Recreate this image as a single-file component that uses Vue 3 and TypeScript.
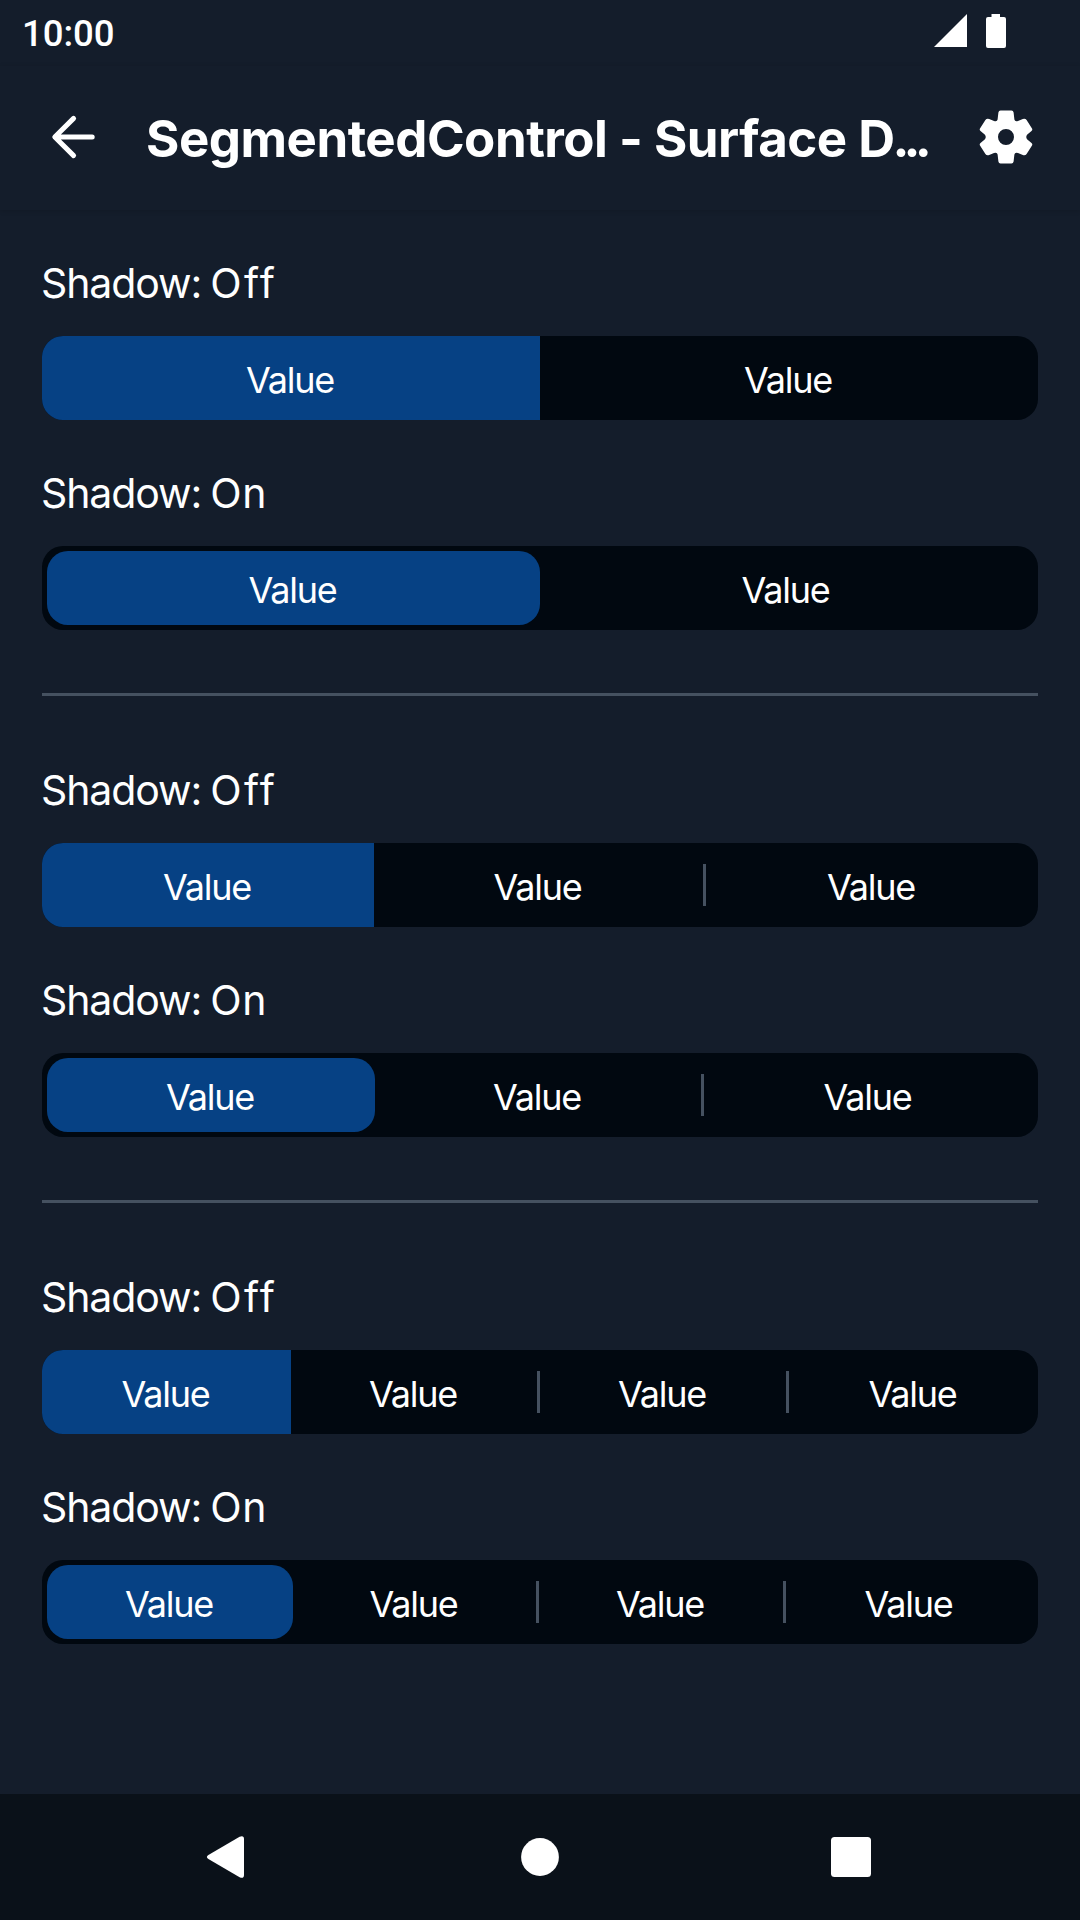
<script setup lang="ts">
interface Control {
  state: string
  raised: boolean
  values: string[]
}

const segments = (count: number): string[] => Array.from({ length: count }, () => 'Value')

const groups: Control[][] = [2, 3, 4].map((count) => [
  { state: 'Off', raised: false, values: segments(count) },
  { state: 'On', raised: true, values: segments(count) },
])
</script>

<template>
  <div class="screen">
    <div class="status">
      <span class="time">10:00</span>
      <svg class="status-icons" width="74" height="36" viewBox="0 0 74 36">
        <path d="M34 1V34H1Z" fill="#fff" />
        <path d="M58.5 1H67V4H71Q73 4 73 6V33Q73 35 71 35H55Q53 35 53 33V6Q53 4 55 4H58.5Z" fill="#fff" />
      </svg>
    </div>

    <header class="app-bar">
      <svg class="back" width="72" height="72" viewBox="0 0 72 72">
        <path d="M37.6 16.4L18.8 35L37.6 53.6M19 35H56.2" fill="none" stroke="#fff" stroke-width="5" stroke-linecap="round" stroke-linejoin="round" />
      </svg>
      <h1 class="title">SegmentedControl - Surface D<span class="dots">...</span></h1>
      <svg class="gear" width="54" height="54" viewBox="-27 -27 54 54">
        <path
          fill="#fff"
          fill-rule="evenodd"
          d="M-5.5 -26.5H5.5Q7.3 -26.3 7.6 -24.5L8.4 -17.5Q8.8 -15 12 -16L16.8 -18Q19.3 -18.8 20.6 -17L26 -8.6Q26.8 -7.2 25.5 -6L21.3 -2.4Q19.2 0 21.3 2.4L25.5 6Q26.8 7.2 26 8.6L20.6 17Q19.3 18.8 16.8 18L12 16Q8.8 15 8.4 17.5L7.6 24.5Q7.3 26.3 5.5 26.5H-5.5Q-7.3 26.3 -7.6 24.5L-8.4 17.5Q-8.8 15 -12 16L-16.8 18Q-19.3 18.8 -20.6 17L-26 8.6Q-26.8 7.2 -25.5 6L-21.3 2.4Q-19.2 0 -21.3 -2.4L-25.5 -6Q-26.8 -7.2 -26 -8.6L-20.6 -17Q-19.3 -18.8 -16.8 -18L-12 -16Q-8.8 -15 -8.4 -17.5L-7.6 -24.5Q-7.3 -26.3 -5.5 -26.5ZM0 -8A8 8 0 1 0 0 8A8 8 0 1 0 0 -8Z"
        />
      </svg>
    </header>

    <main class="content">
      <section v-for="(group, g) in groups" :key="g" class="group">
        <div v-for="control in group" :key="control.state" class="item">
          <div class="label">Shadow: <span class="state" :class="{ off: !control.raised }">{{ control.state }}</span></div>
          <div class="control" :class="['count-' + control.values.length, { raised: control.raised }]">
            <div
              v-for="(value, i) in control.values"
              :key="i"
              class="segment"
              :class="{ selected: i === 0, divided: i > 0 && i < control.values.length - 1 }"
            >
              <span class="value">{{ value }}</span>
            </div>
          </div>
        </div>
      </section>
    </main>

    <nav class="nav">
      <svg width="1080" height="126" viewBox="0 0 1080 126">
        <path d="M208.4 61L239.6 42.7Q244 41 244 45V81Q244 85 239.6 83.3L208.4 65Q205.4 63 208.4 61Z" fill="#fff" />
        <circle cx="540" cy="63" r="18.9" fill="#fff" />
        <rect x="831" y="43" width="40" height="40" rx="3.5" fill="#fff" />
      </svg>
    </nav>
  </div>
</template>

<style>
body {
  margin: 0;
  background: #141d2b;
}
</style>

<style scoped>
.screen {
  display: flex;
  flex-direction: column;
  width: 1080px;
  height: 1920px;
  overflow: hidden;
  background: #141d2b;
  color: #fff;
  font-family: Inter, "Liberation Sans", sans-serif;
}
.status {
  display: flex;
  justify-content: space-between;
  height: 66px;
  padding: 0 73px 0 22px;
  box-sizing: border-box;
}
.time {
  font: 500 36.5px/67px Roboto, sans-serif;
}
.status-icons {
  margin-top: 13px;
}
.app-bar {
  display: flex;
  align-items: center;
  height: 144px;
  padding: 0 47px 0 36px;
  box-sizing: border-box;
  box-shadow: 0 1px 5px rgba(0, 0, 0, 0.14);
}
.back {
  flex: none;
  margin-top: -1px;
}
.title {
  flex: 1;
  margin: 2px 0 0 38px;
  font-size: 51px;
  font-weight: 650;
  letter-spacing: -0.5px;
  line-height: 64px;
  white-space: nowrap;
}
.dots {
  margin-left: -2px;
  letter-spacing: -6px;
}
.gear {
  flex: none;
  margin-top: -3px;
}
.content {
  flex: 1;
  padding: 48px 42px 0;
}
.group + .group {
  margin-top: 63px;
  padding-top: 69px;
  border-top: 3px solid #455160;
}
.item + .item {
  margin-top: 48px;
}
.label {
  height: 54px;
  margin: 0 0 24px -1px;
  font-size: 41px;
  line-height: 51px;
  letter-spacing: -1.1px;
  word-spacing: -1.5px;
  white-space: nowrap;
}
.state {
  letter-spacing: 0.8px;
}
.state.off {
  letter-spacing: 2.4px;
}
.control {
  display: grid;
  height: 84px;
  box-sizing: border-box;
  border-radius: 21px;
  overflow: hidden;
  background: #010810;
}
.count-2 { grid-template-columns: 1fr 1fr; }
.count-3 { grid-template-columns: repeat(3, 1fr); }
.count-4 { grid-template-columns: repeat(4, 1fr); }
.raised { padding: 5px; }
.raised.count-3 { grid-template-columns: 328px 329px 329px; }
.raised.count-4 { grid-template-columns: 246px 246px 247px 247px; }
.segment {
  display: flex;
  align-items: center;
}
.selected {
  background: #064184;
}
.raised .selected {
  border-radius: 21px;
}
.value {
  flex: 1;
  padding: 4px 2px 0 0;
  text-align: center;
  font-size: 36px;
  line-height: 44px;
  letter-spacing: -1.2px;
}
.divided::after {
  content: "";
  width: 3px;
  height: 42px;
  background: #455160;
}
.nav {
  height: 126px;
  background: #0a1119;
}
.nav svg {
  display: block;
}
</style>
